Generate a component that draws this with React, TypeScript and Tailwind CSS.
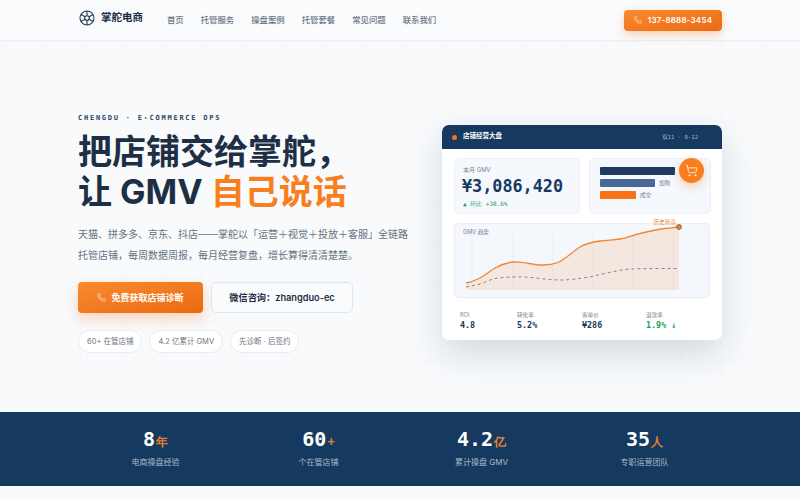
import React from 'react';
import { Phone, ShoppingCart } from 'lucide-react';

const navItems = ['首页', '托管服务', '操盘案例', '托管套餐', '常见问题', '联系我们'];
const chips = ['60+ 在管店铺', '4.2 亿累计 GMV', '先诊断 · 后签约'];
const stats = [
  { value: '8', unit: '年', label: '电商操盘经验' },
  { value: '60', unit: '+', label: '个在管店铺' },
  { value: '4.2', unit: '亿', label: '累计操盘 GMV' },
  { value: '35', unit: '人', label: '专职运营团队' },
];
const kpis = [
  { label: 'ROI', value: '4.8', color: 'text-[#163a5f]', width: 'w-[57px]' },
  { label: '转化率', value: '5.2%', color: 'text-[#163a5f]', width: 'w-[65px]' },
  { label: '客单价', value: '¥286', color: 'text-[#163a5f]', width: 'w-[64px]' },
  { label: '退款率', value: '1.9% ↓', color: 'text-[#1f9d63]', width: 'w-[60px]' },
];

const HelmLogo = () => (
  <svg width="16" height="16" viewBox="0 0 16 16" fill="none" stroke="#1e3a5c" strokeWidth="1.1">
    <circle cx="8" cy="8" r="7" />
    <circle cx="8" cy="8" r="2.3" />
    <path d="M8 1v4.7M8 10.3V15M1.9 4.5l4.1 2.3M10 9.2l4.1 2.3M14.1 4.5 10 6.8M6 9.2l-4.1 2.3" />
  </svg>
);

const curve =
  'M0 58C5 57 10 55 14 53C20 50 24 46 29 43C35 39.5 41 37.5 48 37C55 36.6 62 38.5 69 39.5C77 40.5 84 40.5 92 37.5C100 34 106 27 114 22C120 18.5 127 17 134 16C142 15 148 15 154 14C161 13 167 10 174 8.5C182 6.5 190 4.5 199 3.5C204 3 209 2.3 213 2';

const TrendChart = () => (
  <svg width="220" height="68" viewBox="0 0 220 68" fill="none" className="block overflow-visible">
    {[6, 47, 87, 127, 167, 207].map((x) => (
      <line key={x} x1={x} x2={x} y1="8" y2="65" stroke="#e6ebf2" strokeWidth="0.6" />
    ))}
    <path d={`${curve}L213 65L0 65Z`} fill="#f97316" fillOpacity="0.12" />
    <path d={curve} stroke="#f5842b" strokeWidth="1.3" />
    <path
      d="M0 62C6 61 10 60 14 59C20 57 24 54.5 29 53.5C36 52.5 48 51.5 59 52C70 52.7 84 55 94 55C102 55.3 112 53.5 124 52C136 49 150 45.5 164 44C176 43.5 195 43.5 211 43.5"
      stroke="#7d8795"
      strokeWidth="1"
      strokeDasharray="3 3"
    />
    <circle cx="213" cy="2" r="2.4" fill="#f5842b" stroke="#7c5a3e" strokeWidth="0.9" />
  </svg>
);

const App: React.FC = function App() {
  return (
    <div className="w-[800px] h-[500px] overflow-hidden bg-[#f8fafc] font-['Inter','Noto_Sans_CJK_SC',sans-serif] text-[#1e2f45]">
      <header className="h-[41px] border-b border-[#eceff4] bg-[#f9fbfd]">
        <div className="mx-auto flex h-10 w-[644px] items-center">
          <div className="mb-[5px] flex items-center gap-[6px] pl-[1px]">
            <HelmLogo />
            <span className="text-[10.5px] font-bold text-[#1e2f45]">掌舵电商</span>
          </div>
          <nav className="ml-[24px] flex gap-[17px] text-[8.4px] font-medium text-[#6b7685]">
            {navItems.map((item) => (
              <span key={item}>{item}</span>
            ))}
          </nav>
          <button className="ml-auto flex h-[21px] w-[98px] items-center justify-center gap-[6px] rounded-[4px] bg-gradient-to-br from-[#fb8a2e] to-[#ea6a10] text-[8px] font-semibold tracking-[0.2px] text-white shadow-[0_4px_10px_rgba(249,115,22,0.3)]">
            <Phone size={8} strokeWidth={1.5} />
            137-8888-3454
          </button>
        </div>
      </header>

      <main className="h-[371px] bg-[linear-gradient(#f5f7fa_1px,transparent_1px),linear-gradient(90deg,#f5f7fa_1px,transparent_1px)] bg-[size:40px_40px]">
        <div className="mx-auto grid h-full w-[644px] grid-cols-[332px_280px] gap-x-8">
          <div className="pt-[72px]">
            <p className="font-['DejaVu_Sans_Mono',monospace] text-[7px] font-bold leading-[10px] tracking-[1.75px] text-[#2b4665]">CHENGDU · E-COMMERCE OPS</p>
            <h1 className="mt-[9px] text-[34px] font-bold leading-[40px] text-[#1e2f45]">
              把店铺交给掌舵，
              <br />
              让 GMV <span className="text-[#f97f1e]">自己说话</span>
            </h1>
            <p className="mt-[12px] whitespace-nowrap text-[10px] leading-[21px] text-[#67717f]">
              天猫、拼多多、京东、抖店——掌舵以「运营＋视觉＋投放＋客服」全链路
              <br />
              托管店铺，每周数据周报，每月经营复盘，增长算得清清楚楚。
            </p>
            <div className="mt-[16px] flex gap-2">
              <button className="flex h-[31px] w-[125px] items-center justify-center gap-[5px] rounded-[4px] bg-gradient-to-br from-[#fb8a2e] to-[#ea6a10] text-[9px] font-bold text-white shadow-[0_6px_14px_rgba(249,115,22,0.28)]">
                <Phone size={9} strokeWidth={1.5} />
                免费获取店铺诊断
              </button>
              <button className="h-[31px] w-[142px] rounded-[5px] border border-[#e1e6ee] bg-[#fafbfd] text-[9.2px] font-semibold text-[#1e2f45]">
                微信咨询：zhangduo-ec
              </button>
            </div>
            <div className="mt-[17px] flex gap-[7px]">
              {chips.map((chip) => (
                <span key={chip} className="flex h-[23px] items-center whitespace-nowrap rounded-full border border-[#e8ebf0] bg-white px-[8px] text-[7.5px] text-[#6d7785]">
                  {chip}
                </span>
              ))}
            </div>
          </div>

          <div className="pt-[84px]">
            <div className="relative w-[280px] rounded-[7px] bg-white shadow-[0_14px_34px_rgba(30,50,80,0.16)]">
              <div className="flex h-6 items-center rounded-t-[7px] bg-[#163a5f] px-[10px]">
                <span className="h-[5px] w-[5px] rounded-full bg-[#f97316]" />
                <span className="ml-[6px] text-[6.5px] font-semibold text-white">店铺经营大盘</span>
                <span className="ml-auto mr-[14px] font-['DejaVu_Sans_Mono',monospace] text-[5.6px] text-[#a8b8ca]">双11 · 0-12</span>
              </div>
              <div className="px-[12px] pt-[9px]">
                <div className="grid grid-cols-[126px_122px] gap-[9px]">
                  <div className="h-[56px] rounded-[5px] border border-[#edf0f5] bg-[#f5f8fc] px-[7px] pt-[7px]">
                    <p className="pl-[1px] text-[6px] leading-[8px] text-[#7a8492]">本月 GMV</p>
                    <p className="mt-[2px] font-['DejaVu_Sans_Mono',monospace] text-[16.8px] font-bold leading-[21px] text-[#163a5f]">¥3,086,420</p>
                    <p className="mt-[3px] pl-[1px] font-['DejaVu_Sans_Mono',monospace] text-[6px] leading-[8px] text-[#1f9d63]">▲ 环比 +38.6%</p>
                  </div>
                  <div className="flex h-[56px] flex-col gap-[4px] rounded-[5px] border border-[#edf0f5] bg-[#f5f8fc] pl-[10px] pt-[8px]">
                    <div className="h-2 w-[75px] rounded-[1px] bg-[#1d3a63]" />
                    <div className="flex h-2 items-center gap-1">
                      <div className="h-2 w-[55px] rounded-[1px] bg-[#4a6896]" />
                      <span className="text-[5.6px] text-[#7a8492]">加购</span>
                    </div>
                    <div className="flex h-2 items-center gap-1">
                      <div className="h-2 w-9 rounded-[1px] bg-[#f97316]" />
                      <span className="text-[5.6px] text-[#7a8492]">成交</span>
                    </div>
                  </div>
                </div>
                <div className="relative mt-[9px] h-[75px] rounded-[5px] border border-[#e9eef5] bg-[#f4f7fc] pl-[11px] pt-[1px]">
                  <span className="absolute left-[8px] top-[4px] text-[5.6px] text-[#7a8492]">GMV 趋势</span>
                  <span className="absolute right-[33px] top-[-6px] text-[5.6px] text-[#f5842b]">历史新高</span>
                  <TrendChart />
                </div>
                <div className="flex pb-[9px] pl-[6px] pt-[13px]">
                  {kpis.map((kpi) => (
                    <div key={kpi.label} className={kpi.width}>
                      <p className="text-[5.6px] leading-[8px] text-[#7a8492]">{kpi.label}</p>
                      <p className={`mt-[1px] font-['DejaVu_Sans_Mono',monospace] text-[8.4px] font-bold leading-[11px] ${kpi.color}`}>{kpi.value}</p>
                    </div>
                  ))}
                </div>
              </div>
              <div className="absolute right-[18px] top-[33px] flex h-[25px] w-[25px] items-center justify-center rounded-full bg-[#f97f1e] shadow-[0_4px_10px_rgba(249,115,22,0.3)]">
                <ShoppingCart size={13} strokeWidth={1.4} className="text-white" />
              </div>
            </div>
          </div>
        </div>
      </main>

      <section className="h-[74px] bg-[#163a5f]">
        <div className="mx-auto grid h-full w-[652px] grid-cols-4 text-center">
          {stats.map((stat) => (
            <div key={stat.label} className="pt-[14px]">
              <p className="font-['DejaVu_Sans_Mono',monospace] text-[20px] font-bold leading-[26px] text-white">
                {stat.value}
                <span className="ml-[1px] text-[12px] text-[#e8802f]">{stat.unit}</span>
              </p>
              <p className="mt-[1px] text-[8px] leading-[12px] text-[#a9b8c9]">{stat.label}</p>
            </div>
          ))}
        </div>
      </section>
    </div>
  );
};

export default App;
